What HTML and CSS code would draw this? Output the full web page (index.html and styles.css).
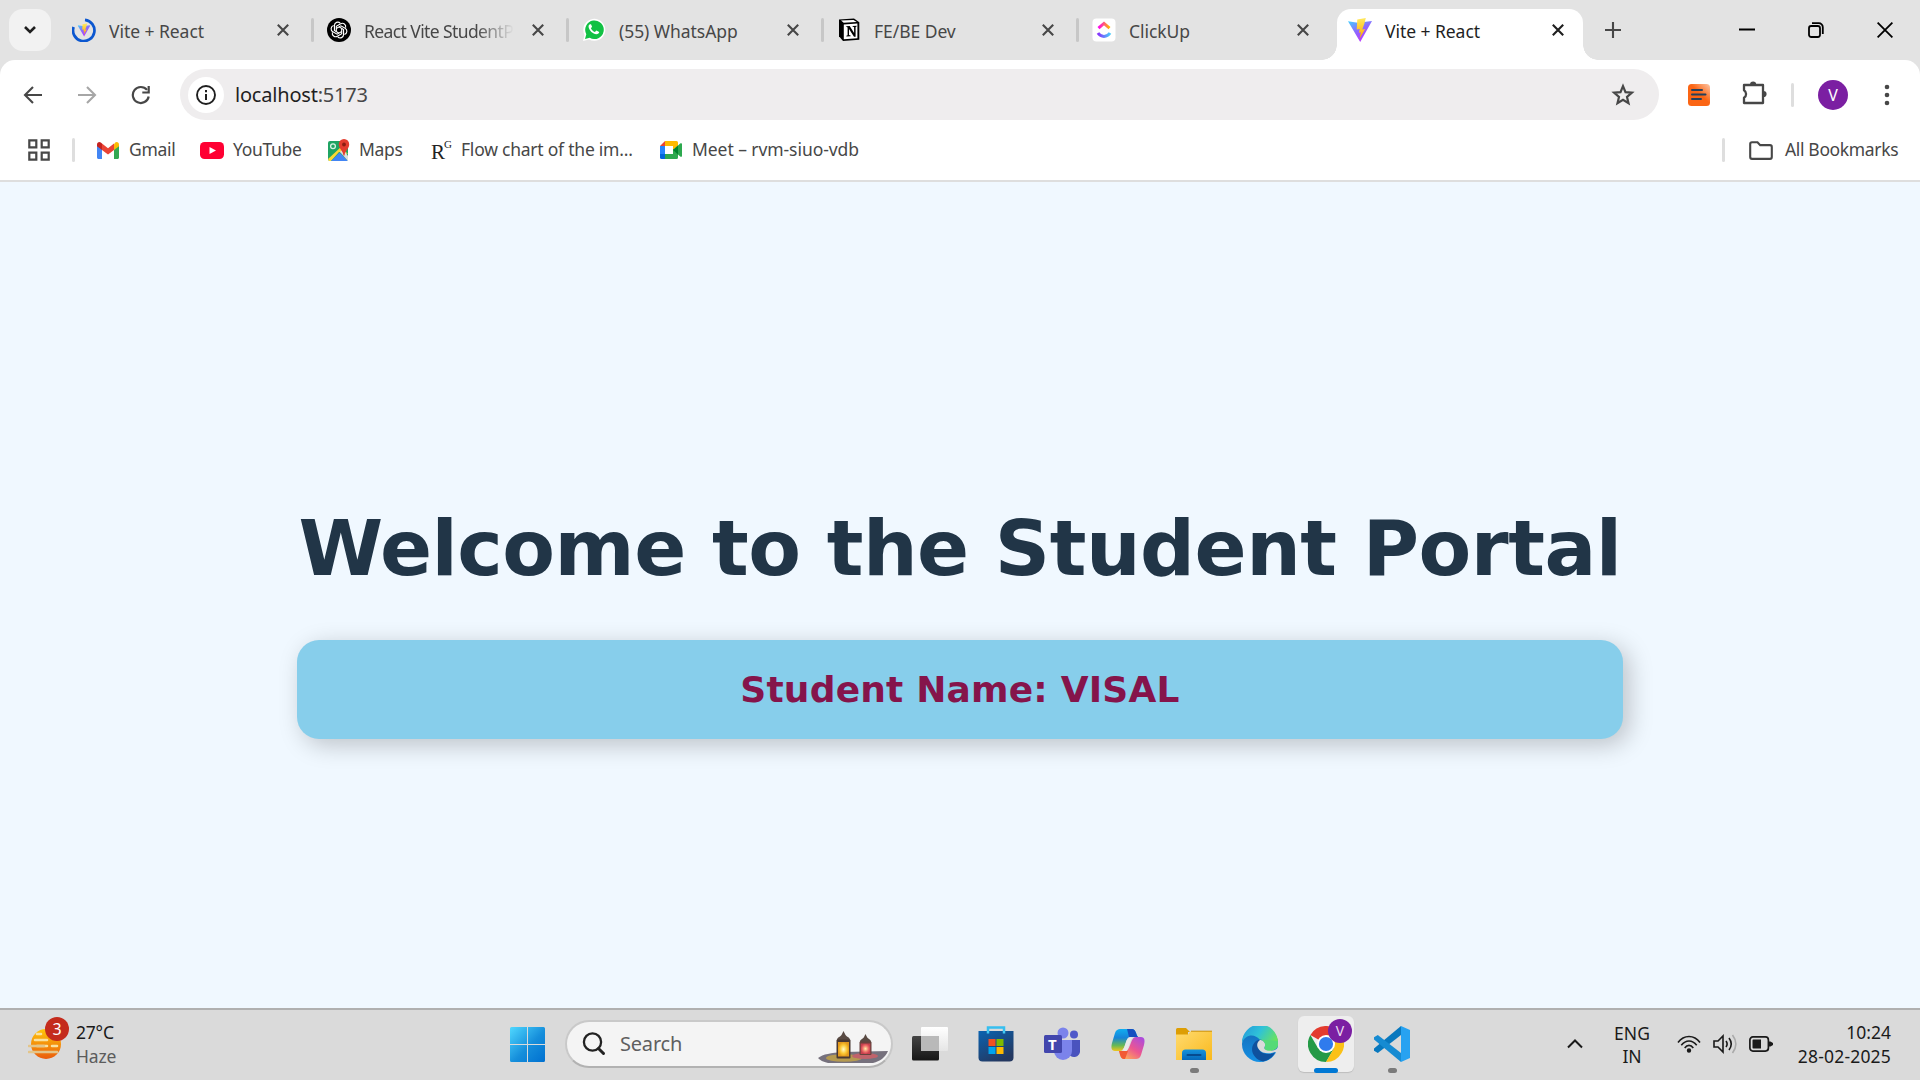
FILE: index.html
```html
<!DOCTYPE html>
<html lang="en">
<head>
<meta charset="utf-8">
<title>Vite + React</title>
<link rel="stylesheet" href="styles.css">
</head>
<body>
<svg class="defs" width="0" height="0" aria-hidden="true">
  <defs>
    <linearGradient id="viteBody" x1="0" y1="0" x2=".6" y2="1"><stop offset="0" stop-color="#41d1ff"/><stop offset=".5" stop-color="#8a6cff"/><stop offset="1" stop-color="#bd34fe"/></linearGradient>
    <linearGradient id="viteBolt" x1="0" y1="0" x2="0" y2="1"><stop offset="0" stop-color="#ffea60"/><stop offset="1" stop-color="#ffa800"/></linearGradient>
    <linearGradient id="clickTop" x1="0" y1="0" x2="1" y2="0"><stop offset="0" stop-color="#ff02f0"/><stop offset="1" stop-color="#ffb800"/></linearGradient>
    <linearGradient id="clickBottom" x1="0" y1="0" x2="1" y2="0"><stop offset="0" stop-color="#8930fd"/><stop offset="1" stop-color="#49ccf9"/></linearGradient>
    <linearGradient id="ext" x1="0" y1="1" x2="1" y2="0"><stop offset=".55" stop-color="#fb6514"/><stop offset="1" stop-color="#fcc7a8"/></linearGradient>
    <linearGradient id="win" x1="0" y1="0" x2="1" y2="1"><stop offset="0" stop-color="#50d8ff"/><stop offset=".55" stop-color="#158edb"/><stop offset="1" stop-color="#0070d0"/></linearGradient>
    <linearGradient id="sun" x1="0" y1="0" x2="0" y2="1"><stop offset="0" stop-color="#ffc60a"/><stop offset="1" stop-color="#ea5c0c"/></linearGradient>
    <linearGradient id="store" x1="0" y1="0" x2=".6" y2="1"><stop offset="0" stop-color="#0a63b1"/><stop offset="1" stop-color="#243860"/></linearGradient>
    <linearGradient id="dark" x1="0" y1="0" x2="0" y2="1"><stop offset="0" stop-color="#444"/><stop offset="1" stop-color="#161616"/></linearGradient>
    <linearGradient id="pane" x1="0" y1="0" x2="0" y2="1"><stop offset="0" stop-color="#fff"/><stop offset="1" stop-color="#e5e5e5"/></linearGradient>
    <linearGradient id="copA" x1="0" y1="0" x2="0" y2="1"><stop offset="0" stop-color="#11aef0"/><stop offset=".4" stop-color="#1684d8"/><stop offset=".75" stop-color="#68b955"/><stop offset="1" stop-color="#f0c51c"/></linearGradient>
    <linearGradient id="copB" x1="1" y1="0" x2=".2" y2="1"><stop offset="0" stop-color="#a349e8"/><stop offset=".55" stop-color="#ec5790"/><stop offset="1" stop-color="#ffb054"/></linearGradient>
    <linearGradient id="folder" x1="0" y1="0" x2="1" y2="1"><stop offset="0" stop-color="#ffdb70"/><stop offset="1" stop-color="#f9b91d"/></linearGradient>
    <linearGradient id="folderBlue" x1="0" y1="0" x2="0" y2="1"><stop offset="0" stop-color="#1593dc"/><stop offset="1" stop-color="#0568ba"/></linearGradient>
    <linearGradient id="edgeTop" x1="0" y1="0" x2="1" y2=".5"><stop offset="0" stop-color="#2295dc"/><stop offset=".5" stop-color="#2fc2d8"/><stop offset="1" stop-color="#6be45a"/></linearGradient>
    <linearGradient id="edgeLeft" x1="0" y1="0" x2="0" y2="1"><stop offset="0" stop-color="#1469b5"/><stop offset="1" stop-color="#1590e4"/></linearGradient>
    <radialGradient id="glow"><stop offset="0" stop-color="#fffbc8"/><stop offset=".6" stop-color="#fbc834"/><stop offset="1" stop-color="#e39a1c"/></radialGradient>
    <radialGradient id="redGlow"><stop offset="0" stop-color="#fff0a8"/><stop offset=".6" stop-color="#ee716a"/><stop offset="1" stop-color="#c8404e"/></radialGradient>
    <symbol id="i-close" viewBox="0 0 14 14"><path d="M1.8 1.8l10.4 10.4M12.2 1.8L1.8 12.2" fill="none" stroke="currentColor" stroke-width="2.1"/></symbol>
    <symbol id="i-vite" viewBox="0 0 24 24"><path d="M0 3.2L9.8 4.8 24 3 12.2 24z" fill="url(#viteBody)"/><path d="M17.8 0L9.3 1.6 8.7 11.6l3-.6-.8 3.8 1.9-.5-1.2 6.2 5.6-9.6-2.9.5 2.2-6.2z" fill="url(#viteBolt)"/></symbol>
  </defs>
</svg>

<header class="tabstrip">
  <button class="tab-search" aria-label="Search tabs"><svg width="14" height="10" viewBox="0 0 14 10"><path d="M2 2l5 5 5-5" fill="none" stroke="#1f1f1f" stroke-width="2.6"/></svg></button>
  <nav class="tabs">
    <div class="tab">
      <svg class="favicon" viewBox="0 0 24 24"><path d="M13 1.8A10.7 10.7 0 1 1 1.6 9" fill="none" stroke="#0b57d0" stroke-width="2.7"/><svg x="5.5" y="5" width="13" height="14"><use href="#i-vite"/></svg></svg>
      <span class="tab-title">Vite + React</span><svg class="close"><use href="#i-close"/></svg>
    </div>
    <div class="tab">
      <svg class="favicon" viewBox="0 0 24 24"><circle cx="12" cy="12" r="12"/><g fill="none" stroke="#fff" stroke-width="1.15"><path id="petal" d="M9.3 13.6V8.3l4.3-2.5a3.4 3.4 0 0 1 5 3.8"/><use href="#petal" transform="rotate(60 12 12)"/><use href="#petal" transform="rotate(120 12 12)"/><use href="#petal" transform="rotate(180 12 12)"/><use href="#petal" transform="rotate(240 12 12)"/><use href="#petal" transform="rotate(300 12 12)"/></g></svg>
      <span class="tab-title t-long">React Vite StudentP</span><svg class="close"><use href="#i-close"/></svg>
    </div>
    <div class="tab">
      <svg class="favicon" viewBox="0 0 24 24"><path d="M1 23l1.5-6.1A11 11 0 1 1 7 21.5z" fill="#fff"/><path d="M3 21l1.3-4.8A9.3 9.3 0 1 1 7.800 19.800z" fill="#12c144"/><path d="M8.4 6.2c-1.200 0-2 1.200-1.800 2.800.5 3.400 4.500 7.200 7.700 7.300 1.800 0 3-1.100 2.900-2.300l-2.800-1.500-1.500 1.500c-1.800-.7-3.200-2.100-4-3.800l1.200-1.400-1.100-2.600z" fill="#fff"/></svg>
      <span class="tab-title">(55) WhatsApp</span><svg class="close"><use href="#i-close"/></svg>
    </div>
    <div class="tab">
      <svg class="favicon" viewBox="0 0 24 24"><path d="M2 1.500L17 .6 22.300 4.300V21.700L6 22.900 2 18.300z" fill="#000"/><path d="M4 2.600l12.500-.7 3.200 2.100-13 .8z" fill="#fff"/><path d="M6.800 6.500l13.600-.9v14.700l-13.600.9z" fill="#fff"/><path d="M8.700 8.300l4-.3 4.400 7V9.100l-1.500-.3v-.9l4-.2v.9l-1 .4v9.800h-1.600l-5-7.800v6.100l1.600.3v.9l-4.200.3v-.9l1.200-.5V9.400z"/></svg>
      <span class="tab-title">FE/BE Dev</span><svg class="close"><use href="#i-close"/></svg>
    </div>
    <div class="tab">
      <svg class="favicon" viewBox="0 0 24 24"><rect x=".5" y=".5" width="23" height="23" rx="4" fill="#fff"/><path d="M6.500 10.200L12 5.400l5.500 4.800" fill="none" stroke="url(#clickTop)" stroke-width="3"/><path d="M6 15c3 4.600 9 4.600 12 0" fill="none" stroke="url(#clickBottom)" stroke-width="3"/></svg>
      <span class="tab-title">ClickUp</span><svg class="close"><use href="#i-close"/></svg>
    </div>
    <div class="tab active">
      <svg class="favicon"><use href="#i-vite"/></svg>
      <span class="tab-title">Vite + React</span><svg class="close"><use href="#i-close"/></svg>
    </div>
  </nav>
  <svg class="new-tab" width="16" height="16" viewBox="0 0 16 16"><path d="M8 0v16M0 8h16" stroke="#474747" stroke-width="2.1"/></svg>
  <div class="window-controls">
    <svg width="16" height="16" viewBox="0 0 16 16"><path d="M0 7.500h16" stroke="#000" stroke-width="2"/></svg>
    <svg width="16" height="16" viewBox="0 0 16 16" fill="none" stroke="#000" stroke-width="1.8"><rect x="1" y="4" width="11" height="11" rx="2.2"/><path d="M4 1.2h6.8a4 4 0 0 1 4 4V12"/></svg>
    <svg width="16" height="16" viewBox="0 0 16 16"><path d="M.6.6l14.8 14.8M15.4.6L.6 15.4" stroke="#000" stroke-width="1.8"/></svg>
  </div>
</header>

<section class="chrome-bars">
  <div class="toolbar">
    <svg class="nav-icon back" viewBox="0 0 20 20"><path d="M19 10H2M10 2l-8 8 8 8" fill="none" stroke="#474747" stroke-width="2.1"/></svg>
    <svg class="nav-icon forward" viewBox="0 0 20 20"><path d="M1 10h17M10 2l8 8-8 8" fill="none" stroke="#a6a6a6" stroke-width="2.1"/></svg>
    <svg class="nav-icon reload" viewBox="0 0 20 20"><path d="M17.7 11.5A8 8 0 1 1 16 4.9" fill="none" stroke="#474747" stroke-width="2.2"/><path d="M18.8 1v7.500h-7.500v-2.100h5.300V1z" fill="#474747"/></svg>
    <div class="omnibox">
      <span class="site-info"><svg width="20" height="20" viewBox="0 0 20 20"><circle cx="10" cy="10" r="9" fill="none" stroke="#1f1f1f" stroke-width="1.9"/><path d="M10 9v6M10 5v2.200" stroke="#1f1f1f" stroke-width="2"/></svg></span>
      <span class="url">localhost<span>:5173</span></span>
      <svg class="star" width="24" height="24" viewBox="0 0 24 24"><path d="M12 3.200l2.500 6 6.400.5-4.900 4.200 1.500 6.300-5.500-3.400-5.500 3.400L8 13.900 3.100 9.700l6.400-.5z" fill="none" stroke="#474747" stroke-width="2.200"/></svg>
    </div>
    <svg class="ext" width="22" height="22" viewBox="0 0 22 22"><rect width="22" height="22" rx="3.5" fill="url(#ext)"/><path d="M4 6h10M4 10.500h13.500M4 15h9" stroke="#24405c" stroke-width="2" stroke-linecap="round"/></svg>
    <svg class="puzzle" width="26" height="26" viewBox="0 0 26 26"><path d="M3 5h19v18H3v-5.200a4.500 4.500 0 0 0 0-7.600z" fill="none" stroke="#474747" stroke-width="2.300" stroke-linejoin="round"/><path d="M9 4.500a3.100 3.100 0 0 1 6.200 0zM22.500 10.900a3.100 3.100 0 0 1 0 6.200z" fill="#474747"/></svg>
    <i class="divider"></i>
    <span class="avatar">V</span>
    <svg class="menu" width="6" height="22" viewBox="0 0 6 22" fill="#474747"><circle cx="3" cy="3" r="2.3"/><circle cx="3" cy="11" r="2.3"/><circle cx="3" cy="19" r="2.3"/></svg>
  </div>

  <div class="bookmarks">
    <svg class="apps" width="22" height="22" viewBox="0 0 22 22" fill="none" stroke="#474747" stroke-width="2.200"><path d="M1.300 1.300h7v7h-7zM13.700 1.300h7v7h-7zM1.300 13.700h7v7h-7zM13.700 13.700h7v7h-7z"/></svg>
    <i class="divider"></i>
    <a class="bm gmail"><svg width="22" height="17" viewBox="0 0 22 17"><path d="M0 3v12.500C0 16.300.7 17 1.500 17H5V7z" fill="#4285f4"/><path d="M22 3v12.500c0 .8-.7 1.500-1.500 1.500H17V7z" fill="#34a853"/><path d="M17 2.200V8l5-3.700V2.500C22 .4 19.800-.7 18.200.6z" fill="#fbbc04"/><path d="M5 8V1.600l6 4.600 6-4.600V8l-6 4.500z" fill="#ea4335"/><path d="M0 2.500v1.800L5 8V1.600L3.800.6C2.200-.7 0 .4 0 2.500z" fill="#c5221f"/></svg><span>Gmail</span></a>
    <a class="bm youtube"><svg width="24" height="17" viewBox="0 0 24 17"><rect width="24" height="17" rx="4.500" fill="#ff0033"/><path d="M9.500 5l6.500 3.500L9.500 12z" fill="#fff"/></svg><span>YouTube</span></a>
    <a class="bm maps"><svg width="23" height="23" viewBox="0 0 23 23"><rect y="2" width="20" height="20" rx="2" fill="#1fa463"/><path d="M0 20L13 8l7 7-9-2-8 9H1z" fill="#fdd835"/><path d="M3 22l8.500-8.500L20 22z" fill="#4285f4"/><path d="M12 13l3-3 5 7v5z" fill="#dedede"/><circle cx="5" cy="7.300" r="2.400" fill="none" stroke="#d7f3e4" stroke-width="1.300"/><path d="M16 0a5.200 5.200 0 0 0-5.200 5.400c0 4.100 4.200 6 4.700 11.100h1c.5-5.100 4.700-7 4.700-11.100A5.200 5.200 0 0 0 16 0z" fill="#e33c2e"/><circle cx="16" cy="5.500" r="1.900" fill="#8d1d12"/></svg><span>Maps</span></a>
    <a class="bm rg"><span class="rg-icon">R<sup>G</sup></span><span class="b-flow">Flow chart of the im...</span></a>
    <a class="bm meet"><svg width="22" height="18" viewBox="0 0 22 18"><path d="M5 0v5H0z" fill="#ea4335"/><path d="M0 5h5v8H0z" fill="#2684fc"/><path d="M0 13h5v5H1.500A1.500 1.500 0 0 1 0 16.500z" fill="#0066da"/><path d="M5 0h11.500A1.500 1.500 0 0 1 18 1.500V9l-5 1V5H5z" fill="#ffba00"/><path d="M5 13h8V8l5 1v7.500a1.500 1.500 0 0 1-1.500 1.500H5z" fill="#2da94f"/><path d="M13 9l7.200-6.500c.8-.7 1.800-.2 1.800.6v11.800c0 .8-1 1.300-1.800.6z" fill="#2da94f"/><path d="M13 9l5-4.500v9z" fill="#00832d"/></svg><span class="b-meet">Meet – rvm-siuo-vdb</span></a>
    <i class="divider push"></i>
    <a class="bm all"><svg width="24" height="19" viewBox="0 0 24 19"><path d="M3 1.200h5.500l2.700 2.900H21a1.800 1.800 0 0 1 1.800 1.800v10.200a1.800 1.800 0 0 1-1.800 1.800H3a1.800 1.800 0 0 1-1.800-1.800V3A1.800 1.800 0 0 1 3 1.200z" fill="none" stroke="#474747" stroke-width="2.100"/></svg><span class="b-all">All Bookmarks</span></a>
  </div>
</section>

<main class="page">
  <div class="portal">
    <h1>Welcome to the Student Portal</h1>
    <div class="card"><h2>Student Name: VISAL</h2></div>
  </div>
</main>

<footer class="taskbar">
  <div class="weather">
    <div class="weather-icon">
      <svg width="36" height="34" viewBox="0 0 36 34"><circle cx="18" cy="16" r="15" fill="url(#sun)"/><g stroke="#f9e1a0" stroke-width="2.600" stroke-linecap="round"><path d="M9 6h4M7 12h12M9 18h10M24 18h5"/><path d="M1 18h15M1 24h28" stroke="#e3c58a"/></g></svg>
      <span class="count">3</span>
    </div>
    <div class="weather-text"><span>27°C</span><span class="w-haze">Haze</span></div>
  </div>
  <div class="apps-row">
    <svg class="start" width="35" height="35" viewBox="0 0 35 35"><path d="M1.500 0H17v17H0V1.500A1.500 1.500 0 0 1 1.500 0zM18 0h15.500A1.500 1.500 0 0 1 35 1.500V17H18zM0 18h17v17H1.500A1.500 1.500 0 0 1 0 33.500zM18 18h17v15.500a1.500 1.500 0 0 1-1.500 1.500H18z" fill="url(#win)"/></svg>
    <div class="search">
      <svg width="24" height="24" viewBox="0 0 24 24"><circle cx="10.500" cy="10" r="8.600" fill="none" stroke="#222" stroke-width="2.300"/><path d="M16.500 16.500l5 5" stroke="#222" stroke-width="3" stroke-linecap="round"/></svg>
      <span>Search</span>
      <svg class="lanterns" width="70" height="34" viewBox="0 0 70 34"><path d="M0 28c5-4 13-5 25-6l45-1c-3 7-8 10-15 12H10C5 32 2 30 0 28z" fill="#76717d"/><ellipse cx="26" cy="28" rx="18" ry="3.800" fill="#b59a50"/><ellipse cx="47" cy="26" rx="13" ry="3" fill="#c0636b"/><g><path d="M19 10c0-3 4-3 5-6l1.500-3L27 4c1 3 5 3 5 6z" fill="#594a43"/><rect x="18.500" y="9.500" width="14" height="19" rx="1" fill="#493832"/><rect x="20" y="12" width="11" height="14.500" fill="url(#glow)"/></g><g><path d="M42 12c0-3 3-3 4-5l1.500-3L49 7c1 2 4 2 4 5z" fill="#594a43"/><rect x="41.500" y="11.500" width="12" height="13.500" rx="1" fill="#67433e"/><rect x="42.700" y="13.500" width="9.600" height="10.500" fill="url(#redGlow)"/></g></svg>
    </div>
    <span class="app"><svg width="36" height="36" viewBox="0 0 36 36"><rect x="0" y="10" width="27" height="24.500" rx="1.500" fill="url(#dark)"/><rect x="9" y="1" width="27" height="24" rx="1" fill="url(#pane)"/><path d="M9 10h18v15H9z" fill="#b9b9b9"/></svg></span>
    <span class="app"><svg width="36" height="36" viewBox="0 0 36 36"><path d="M10 6V1.500h16V6" fill="none" stroke="#36bff0" stroke-width="2.500"/><path d="M.5 5h35v26.500a4 4 0 0 1-4 4h-27a4 4 0 0 1-4-4z" fill="url(#store)"/><path d="M10 7.500V5M26 7.500V5" stroke="#42c9f4" stroke-width="2.500"/><path d="M10.500 13h7v7h-7z" fill="#f25022"/><path d="M18.500 13h7v7h-7z" fill="#7fba00"/><path d="M10.500 21h7v7h-7z" fill="#00a4ef"/><path d="M18.500 21h7v7h-7z" fill="#ffb900"/></svg></span>
    <span class="app"><svg width="36" height="36" viewBox="0 0 36 36"><circle cx="30" cy="8.500" r="4" fill="#5059c9"/><path d="M24 14h12v10a5 5 0 0 1-12 2z" fill="#4a53be"/><circle cx="19" cy="7" r="5.500" fill="#7b83eb"/><path d="M10 14h18v11a9 9 0 0 1-18 0z" fill="#7b83eb"/><rect x="0" y="9" width="18" height="18" rx="1.500" fill="#4246ad"/></svg><b class="teams-t">T</b></span>
    <span class="app"><svg width="36" height="36" viewBox="0 0 36 36"><path d="M10 3h12c4 0 4 6 6 8h-8c-5 0-4 14-10 14H5c-4 0-4-4-3-8L5 7c1-3 3-4 5-4z" fill="url(#copA)"/><path d="M17 3h5c4 0 4 6 6 8h-9z" fill="#164fc0"/><path d="M26 33H14c-4 0-4-6-5-8h6c6 0 5-14 11-14h5c4 0 4 4 3 8l-3 10c-1 3-3 4-5 4z" fill="url(#copB)"/><path d="M14 33c-4 0-4-6-5-8h9l-3 8z" fill="#f15a35"/><path d="M18.500 12c2-1 3-1 4 0-3 2-3 10-6 13-1 0-3 0-4-1 3-3 3-10 6-12z" fill="#e9e9ea"/></svg></span>
    <span class="app"><svg width="36" height="36" viewBox="0 0 36 36"><path d="M0 10V3.500A1.500 1.500 0 0 1 1.500 2H10l4 4h-2v4z" fill="#dd9e05"/><path d="M0 8.500h12L15 5h20a1 1 0 0 1 1 1v28H0z" fill="url(#folder)"/><path d="M15 5.200h21" stroke="#cb920d"/><path d="M6 34v-7a3.500 3.500 0 0 1 3.500-3.500h17A3.500 3.500 0 0 1 30 27v7z" fill="url(#folderBlue)"/><path d="M11.500 29h13" stroke="#064b8f" stroke-width="2" stroke-linecap="round"/></svg><i class="run"></i></span>
    <span class="app"><svg width="36" height="36" viewBox="0 0 36 36"><circle cx="18" cy="18" r="18" fill="url(#edgeLeft)"/><path d="M0 17A18 18 0 0 1 36 16c1 6-4 9-9 9-4 0-5-2-4-4 1-3-1-7-5-7C13 7 3 8 0 17z" fill="url(#edgeTop)"/><path d="M14 15c-8 7-3 18 7 20.500 6-1 10-5 12-9-7 4-20 0-16-9 1-2 2-3 3-3.500-2-.5-4 0-6 1z" fill="#0f519e"/><path d="M18 14c-3 2-4 6-1 9.500 3 4 10 5 16 2.500l4 2v-8c-3 6-9 5-12 4-3-.5-3-2-2-4 1-3-2-6-5-6z" fill="#dadada"/><path d="M36 15c1 6-4 9.500-9 9.500-4 0-5-2-4-4 1-2-1-6-4-7z" fill="#55da77"/></svg></span>
    <span class="app current"><svg width="36" height="36" viewBox="0 0 36 36"><path d="M18 18L2.400 9A18 18 0 0 1 33.600 9z" fill="#e33b2e"/><path d="M2.400 9A18 18 0 0 0 18 36l8-13.500-8-4.500-7.800 4.500z" fill="#249a46"/><path d="M18 9h15.600A18 18 0 0 1 18 36l7.800-13.500z" fill="#fbc116"/><circle cx="18" cy="18" r="9" fill="#fff"/><circle cx="18" cy="18" r="7.100" fill="#2f7bed"/></svg><span class="profile">V</span><i class="run"></i></span>
    <span class="app"><svg width="36" height="36" viewBox="0 0 36 36"><path d="M27 0L0 22.500v2.300L3.800 27 27 9z" fill="#0878be"/><path d="M27 36L0 13.500v-2.300L3.800 9 27 27z" fill="#168bd2"/><path d="M27 0l9 4v28l-9 4z" fill="#27a2f1"/></svg><i class="run"></i></span>
  </div>
  <div class="tray">
    <svg class="chevron" width="16" height="10" viewBox="0 0 16 10"><path d="M1 8.500l7-7 7 7" fill="none" stroke="#1a1a1a" stroke-width="2"/></svg>
    <div class="lang"><span>ENG</span><span>IN</span></div>
    <svg class="wifi" width="24" height="18" viewBox="0 0 24 18" fill="none" stroke="#1a1a1a" stroke-width="1.600"><path d="M1 7.500c6-8 16-8 22 0M4.300 10.300c4.500-5.800 10.900-5.800 15.400 0M7.700 13c2.500-3.500 6.100-3.500 8.600 0"/><circle cx="12" cy="15.500" r="1.400" fill="#1a1a1a"/></svg>
    <svg class="volume" width="24" height="20" viewBox="0 0 24 20" fill="none" stroke="#1a1a1a" stroke-width="1.600"><path d="M1 7h4l5-5v16l-5-5H1zM13 7c1.500 2 1.500 4 0 6M16 4c3 4 3 8 0 12"/><path d="M19.500 1c4.500 6 4.500 12 0 18" stroke="#aaa"/></svg>
    <svg class="battery" width="24" height="16" viewBox="0 0 24 16"><rect x=".9" y=".9" width="18.500" height="14.200" rx="3" fill="none" stroke="#1a1a1a" stroke-width="1.700"/><path d="M3.500 4.500A1 1 0 0 1 4.500 3.500H12v9H4.500a1 1 0 0 1-1-1zM20 5.500h1.500L24 7v2l-2.500 1.500H20z" fill="#1a1a1a"/></svg>
    <div class="clock"><span>10:24</span><span class="c-date">28-02-2025</span></div>
  </div>
</footer>
</body>
</html>
```
FILE: styles.css
```css
* { box-sizing: border-box; }
body {
  margin: 0;
  width: 1920px;
  height: 1080px;
  overflow: hidden;
  display: flex;
  flex-direction: column;
  background: #e3e3e3;
  font: 17.5px/24px "Noto Sans", "Open Sans", sans-serif;
  color: #474747;
}
svg { display: block; flex: none; }
.defs { position: absolute; }
span, a { white-space: nowrap; }

/* Tab strip */
.tabstrip { height: 60px; display: flex; align-items: center; flex: none; }
.tab-search {
  width: 42px; height: 42px; margin-left: 9px; padding: 0;
  border: 0; border-radius: 14px; background: #f2f2f2;
  display: grid; place-items: center;
}
.tabs { display: flex; margin-left: 6px; align-self: stretch; }
.tab {
  width: 255px; height: 60px; padding: 0 0 0 15px;
  display: flex; align-items: center; position: relative;
}
.favicon { width: 24px; height: 24px; }
.tab-title { width: 150px; margin: 1px 17px 0 13px; overflow: hidden; letter-spacing: -.05px; flex: none; }
.tab .close { width: 14px; height: 14px; }
.tab:nth-child(-n+4)::after {
  content: ""; position: absolute; right: -2px; top: 18px;
  width: 3px; height: 24px; border-radius: 2px; background: #c7c7c7;
}
.t-long {
  letter-spacing: -.6px;
  -webkit-mask-image: linear-gradient(90deg, #000 112px, transparent 150px);
  mask-image: linear-gradient(90deg, #000 112px, transparent 150px);
}
.active { color: #1f1f1f; z-index: 0; padding-left: 16px; }
.active .tab-title { margin-right: 16px; }
.active::before {
  content: ""; position: absolute; z-index: -1; left: 5px; right: 4px; top: 9px; bottom: 0;
  background: #fff; border-radius: 14px 14px 0 0;
}
.active::after {
  content: ""; position: absolute; z-index: -1; left: -10px; right: -11px; bottom: 0; height: 15px;
  background:
    radial-gradient(circle at 0 0, transparent 14.5px, #fff 15px) left / 15px 15px no-repeat,
    radial-gradient(circle at 100% 0, transparent 14.5px, #fff 15px) right / 15px 15px no-repeat;
}
.new-tab { margin-left: 18px; }
.window-controls { display: flex; gap: 53px; margin-left: 118px; }

/* Toolbar */
.chrome-bars { height: 122px; flex: none; background: #fff; border-radius: 15px 15px 0 0; border-bottom: 2px solid #dedede; }
.toolbar { height: 69px; display: flex; align-items: center; }
.nav-icon { width: 20px; height: 20px; }
.back { margin-left: 23px; }
.forward { margin-left: 34px; }
.reload { margin-left: 34px; }
.omnibox {
  width: 1479px; height: 51px; margin-left: 29px; padding: 0 24px 0 8px;
  display: flex; align-items: center;
  border-radius: 26px; background: #efedee;
}
.site-info { width: 36px; height: 36px; border-radius: 50%; background: #fff; display: grid; place-items: center; }
.url { margin-left: 11px; font-size: 20px; letter-spacing: -.2px; color: #1f1f1f; }
.url span { color: #474747; }
.star { margin-left: auto; }
.ext { margin-left: 29px; }
.puzzle { margin-left: 31px; margin-top: -3px; }
.divider { width: 3px; height: 24px; border-radius: 2px; background: #dedede; flex: none; }
.toolbar .divider { margin-left: 24px; }
.avatar {
  width: 30px; height: 30px; margin-left: 24px; border-radius: 50%;
  background: #7b1fa2; color: #fff; font-size: 16px; line-height: 30px; text-align: center;
}
.menu { margin-left: 36px; }

.bookmarks { height: 42px; display: flex; align-items: center; }
.apps { margin-left: 28px; }
.apps + .divider { margin-left: 22px; }
.bm { display: flex; align-items: center; flex: none; letter-spacing: -.3px; }
.bm > span { margin-top: -2px; }
.bm svg, .rg-icon { margin-right: 10px; }
.gmail { width: 103px; margin-left: 22px; }
.youtube { width: 128px; }
.youtube svg { margin-right: 9px; }
.maps { width: 103px; }
.maps svg { margin-right: 8px; }
.rg { width: 229px; }
.meet { width: 220px; }
.rg-icon { width: 20px; font: 21px/24px "Liberation Serif", serif; letter-spacing: -1px; color: #222; display: flex; }
.rg-icon { padding-top: 5px; }
.rg-icon sup { font: 11px/11px "Liberation Serif", serif; margin-top: -1px; }
.b-flow { letter-spacing: -.23px; }
.b-meet { letter-spacing: -.07px; }
.b-all { letter-spacing: -.35px; }
.push { margin-left: auto; }
.all { width: 171px; margin-left: 24px; }
.all svg { margin-right: 12px; }

/* Page */
.page { flex: 1; background: #f0f8ff; display: flex; justify-content: center; }
.portal { width: 1326px; padding-top: 320px; font-family: "DejaVu Sans", sans-serif; }
h1 {
  margin: 0 0 44px; font-size: 76.8px; line-height: 94px; text-align: center; white-space: nowrap;
  letter-spacing: -.5px; color: #213547;
}
.card {
  height: 99px; border-radius: 22px; background: #87ceeb;
  box-shadow: 6px 6px 24px rgba(0, 0, 0, .22);
  display: grid; place-items: center;
}
h2 { margin: 0; font-size: 36px; line-height: 44px; letter-spacing: .2px; color: #85144b; white-space: nowrap; }

/* Taskbar */
.taskbar {
  height: 72px; flex: none; background: #dadada; border-top: 2px solid #b0b0b0;
  padding-bottom: 2px;
  display: flex; align-items: center; color: #1a1a1a;
}
.weather { width: 482px; margin-left: 28px; display: flex; }
.weather-icon { position: relative; width: 48px; padding-top: 8px; }
.count {
  position: absolute; left: 17px; top: -3px; width: 24px; height: 24px; border-radius: 50%;
  background: #c42b1c; color: #fff; font-size: 16px; line-height: 24px; text-align: center;
}
.weather-text { display: flex; flex-direction: column; letter-spacing: -.2px; }
.w-haze { color: #5c5c5c; }
.apps-row { display: flex; align-items: center; width: 1056px; }
.search {
  width: 328px; height: 48px; margin: 0 4px 0 20px; padding: 0 3px 0 15px;
  border: 2px solid #c9c9c9; border-bottom-color: #b2b2b2; border-radius: 24px; background: #f4f4f4;
  display: flex; align-items: center; color: #5f5f5f; font-size: 20px;
}
.search span { margin-left: 14px; letter-spacing: -.2px; }
.lanterns { margin-left: auto; margin-top: 6px; }
.app { width: 66px; height: 70px; display: flex; align-items: center; justify-content: center; position: relative; }
.app svg { position: relative; }
.teams-t { position: absolute; left: 19px; top: 26px; font-size: 15px; line-height: 18px; color: #fff; }
.run { position: absolute; left: 29px; bottom: 6px; width: 9px; height: 5px; border-radius: 3px; background: #7b7b7b; }
.current::before {
  content: ""; position: absolute; left: 5px; top: 7px; width: 56px; height: 56px;
  border-radius: 6px; background: #eeeeee; box-shadow: 0 1px 1px #bdbdbd;
}
.current .run { left: 21px; width: 24px; background: #0078d4; }
.profile {
  position: absolute; left: 35px; top: 10px; width: 24px; height: 24px; border-radius: 50%;
  background: #7b1fa2; color: #eadcf0; font-size: 14px; line-height: 24px; text-align: center;
}
.tray { display: flex; align-items: center; }
.lang, .clock { display: flex; flex-direction: column; }
.chevron { margin-left: 1px; }
.lang { width: 50px; margin-left: 24px; text-align: center; line-height: 23px; padding-top: 2px; }
.wifi { margin-left: 20px; }
.volume { margin-left: 12px; }
.battery { margin-left: 12px; }
.clock { width: 118px; text-align: right; }
.c-date { letter-spacing: .18px; }
```
